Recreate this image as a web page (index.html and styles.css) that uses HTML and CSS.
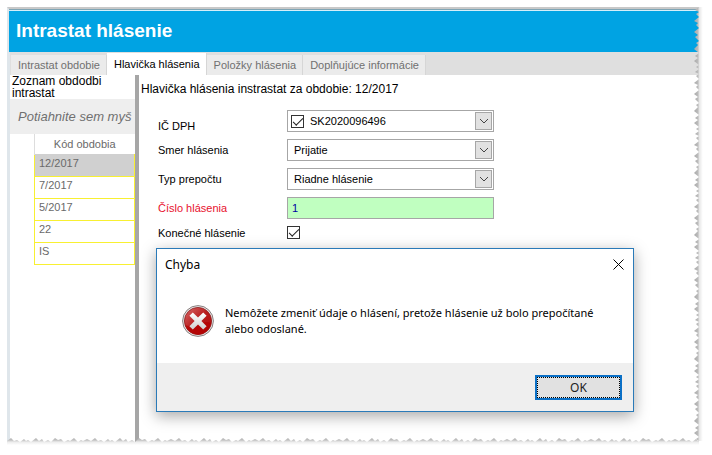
FILE: index.html
```html
<!DOCTYPE html>
<html lang="sk">
<head>
  <meta charset="UTF-8">
  <meta name="viewport" content="width=device-width, initial-scale=1.0">
  <title>Intrastat hlásenie</title>
  <link rel="stylesheet" href="styles.css">
</head>
<body>
  <div class="window">
    <header class="title-bar">
      <h1>Intrastat hlásenie</h1>
    </header>

    <nav class="tabs">
      <a href="#obdobie">Intrastat obdobie</a>
      <a href="#hlavicka" class="active">Hlavička hlásenia</a>
      <a href="#polozky">Položky hlásenia</a>
      <a href="#informacie">Doplňujúce informácie</a>
    </nav>

    <div class="content">
      <aside class="sidebar">
        <h2>Zoznam obdodbi intrastat</h2>
        <div class="group-panel">Potiahnite sem myš</div>
        <table class="periods">
          <thead>
            <tr><th>Kód obdobia</th></tr>
          </thead>
          <tbody>
            <tr class="selected"><td>12/2017</td></tr>
            <tr><td>7/2017</td></tr>
            <tr><td>5/2017</td></tr>
            <tr><td>22</td></tr>
            <tr><td>IS</td></tr>
          </tbody>
        </table>
      </aside>

      <main class="detail">
        <h2>Hlavička hlásenia instrastat za obdobie: 12/2017</h2>
        <form>
          <div class="field field-low">
            <label for="icdph">IČ DPH</label>
            <div class="combo">
              <input type="checkbox" class="check" aria-label="Použiť IČ DPH" checked>
              <select id="icdph"><option>SK2020096496</option></select>
              <span class="arrow"><svg width="10" height="6" viewBox="0 0 10 6"><path d="M1 1l4 4 4-4"/></svg></span>
            </div>
          </div>
          <div class="field">
            <label for="smer">Smer hlásenia</label>
            <div class="combo">
              <select id="smer"><option>Prijatie</option></select>
              <span class="arrow"><svg width="10" height="6" viewBox="0 0 10 6"><path d="M1 1l4 4 4-4"/></svg></span>
            </div>
          </div>
          <div class="field">
            <label for="typ">Typ prepočtu</label>
            <div class="combo">
              <select id="typ"><option>Riadne hlásenie</option></select>
              <span class="arrow"><svg width="10" height="6" viewBox="0 0 10 6"><path d="M1 1l4 4 4-4"/></svg></span>
            </div>
          </div>
          <div class="field">
            <label for="cislo" class="required">Číslo hlásenia</label>
            <input type="text" id="cislo" class="number" value="1">
          </div>
          <div class="field">
            <label for="konecne">Konečné hlásenie</label>
            <input type="checkbox" id="konecne" class="check" checked>
          </div>
        </form>
      </main>
    </div>

    <!-- torn paper edges -->
    <svg class="tear tear-right" aria-hidden="true">
      <defs>
        <linearGradient id="fadeRight" gradientUnits="userSpaceOnUse" x1="0" y1="0" x2="12" y2="0">
          <stop offset="0" stop-color="#a0a0a0"/>
          <stop offset="0.5" stop-color="#bcbcbc"/>
          <stop offset="0.6" stop-color="#e6e6e6"/>
          <stop offset="0.9" stop-color="#ffffff"/>
        </linearGradient>
        <pattern id="teethRight" width="12" height="62" patternUnits="userSpaceOnUse">
          <path fill="url(#fadeRight)" d="M12 0H7L3 3 7 5 4 7 7 10 2 14 6 16 4 18 7 21 2 25 6 28 3 30 7 34 4 36 6 38 2 42 7 46 3 49 6 51 2 54 7 58 4 60 7 62H12Z"/>
        </pattern>
      </defs>
      <rect width="12" height="100%" fill="url(#teethRight)"/>
    </svg>
    <svg class="tear tear-bottom" aria-hidden="true">
      <defs>
        <linearGradient id="fadeBottom" gradientUnits="userSpaceOnUse" x1="0" y1="0" x2="0" y2="10">
          <stop offset="0" stop-color="#a8a8a8"/>
          <stop offset="0.4" stop-color="#c0c0c0"/>
          <stop offset="0.6" stop-color="#ececec"/>
          <stop offset="0.9" stop-color="#ffffff"/>
        </linearGradient>
        <pattern id="teethBottom" width="84" height="10" patternUnits="userSpaceOnUse">
          <path fill="url(#fadeBottom)" d="M0 10V5L4 2 7 5 10 4 13 6 17 3 19 5 21 4 24 6 29 2 32 5 35 3 37 6 41 4 44 6 48 2 51 4 54 3 57 6 61 4 63 5 67 2 71 6 74 4 76 5 80 3 84 5V10Z"/>
        </pattern>
      </defs>
      <rect width="100%" height="10" fill="url(#teethBottom)"/>
    </svg>

    <section class="dialog" role="alertdialog" aria-labelledby="dialog-title">
      <div class="dialog-title">
        <span id="dialog-title">Chyba</span>
        <button type="button" class="close" aria-label="Zavrieť">
          <svg width="11" height="11" viewBox="0 0 11 11"><path d="M0.5 0.5l10 10M10.5 0.5l-10 10"/></svg>
        </button>
      </div>
      <div class="dialog-body">
        <svg class="error-icon" width="32" height="32" viewBox="0 0 32 32" aria-hidden="true">
          <defs>
            <linearGradient id="red" x1="0" y1="0" x2="1" y2="1">
              <stop offset="0" stop-color="#d96a6a"/>
              <stop offset="0.5" stop-color="#b81c1c"/>
              <stop offset="1" stop-color="#b00808"/>
            </linearGradient>
            <linearGradient id="cross" x1="0" y1="0" x2="0" y2="1">
              <stop offset="0" stop-color="#ffffff"/>
              <stop offset="1" stop-color="#cfcfcf"/>
            </linearGradient>
          </defs>
          <circle cx="16" cy="16" r="15.4" fill="#e8e8e8" stroke="#8a8080" stroke-width="1"/>
          <circle cx="16" cy="16" r="13.6" fill="url(#red)" stroke="#8c1c1c" stroke-width="0.8"/>
          <path d="M3 20A13.3 13.3 0 0 0 29 18C22 14 12 24 3 20Z" fill="#b40000" opacity="0.7"/>
          <path d="M10.8 7.4L16 12.6 21.2 7.4 24.6 10.8 19.4 16 24.6 21.2 21.2 24.6 16 19.4 10.8 24.6 7.4 21.2 12.6 16 7.4 10.8Z" fill="url(#cross)"/>
        </svg>
        <p>Nemôžete zmeniť údaje o hlásení, pretože hlásenie už bolo prepočítané alebo odoslané.</p>
      </div>
      <div class="dialog-footer">
        <button type="button" class="ok">OK</button>
      </div>
    </section>
  </div>
</body>
</html>
```
FILE: styles.css
```css
* {
    box-sizing: border-box;
}

body {
    margin: 0;
    padding: 7px 8px 9px 7px;
    background-color: #ffffff;
    color: #000000;
    font-family: "Liberation Sans", Arial, sans-serif;
    font-size: 11px;
}

h1,
h2,
p {
    margin: 0;
}

.window {
    position: relative;
    display: flex;
    flex-direction: column;
    min-height: calc(100vh - 16px);
    padding-right: 4px;
}

.title-bar {
    display: flex;
    align-items: center;
    height: 45px;
    padding-left: 7px;
    border-top: 2px solid #c8c8c8;
    border-left: 2px solid #dfe6eb;
    background-color: #00a3e3;
    box-shadow: inset 0 1px #7fa5b5, inset 0 2px #d5eef9;
}

h1 {
    color: #ffffff;
    font-size: 19px;
    line-height: 24px;
}

.tabs {
    display: flex;
    align-items: flex-end;
    height: 23px;
    padding-left: 1px;
    border-left: 3px solid #dfe6eb;
    background-color: #dfdfdf;
}

.tabs a {
    padding: 0 6px 0 7px;
    border-right: 1px solid #d6d6d6;
    background-color: #ebebeb;
    color: #707070;
    line-height: 20px;
    text-decoration: none;
    white-space: nowrap;
}

.tabs a.active {
    background-color: #ffffff;
    color: #000000;
    line-height: 22px;
}

.content {
    display: flex;
    flex: 1;
    border-left: 3px solid #dfe6eb;
}

.sidebar {
    flex: none;
    width: 129px;
    border-right: 4px solid #a6a6a6;
    overflow: hidden;
}

h2 {
    font-size: 12px;
    font-weight: normal;
}

.sidebar h2 {
    padding-left: 2px;
    line-height: 12px;
}

.group-panel {
    height: 35px;
    padding-left: 8px;
    background-color: #eeeeee;
    color: #707070;
    font-size: 13px;
    font-style: italic;
    line-height: 35px;
    white-space: nowrap;
}

.periods {
    width: 101px;
    margin-left: 24px;
    border-collapse: collapse;
    color: #6a6a6a;
}

.periods th {
    height: 20px;
    padding: 0;
    border-left: 1px solid #dddddd;
    font-weight: normal;
}

.periods td {
    height: 22px;
    padding: 1px 4px;
    border: 1px solid #f8f032;
    line-height: 14px;
    vertical-align: top;
}

.periods .selected td {
    border-top-color: #d0d0d0;
    background-color: #d0d0d0;
}

.detail {
    flex: 1;
    padding: 6px 2px;
}

.detail h2 {
    line-height: 16px;
}

.detail form {
    display: flex;
    flex-direction: column;
    gap: 7px;
    padding: 13px 0 0 17px;
}

.field {
    display: grid;
    grid-template-columns: 129px 207px;
    align-items: center;
}

.field-low label {
    align-self: end;
}

.required {
    color: #e8112d;
}

.combo {
    position: relative;
    display: flex;
    align-items: center;
    height: 22px;
    border: 1px solid #a6a6a6;
}

.combo .check {
    margin-left: 3px;
}

.combo select {
    flex: 1;
    height: 20px;
    padding: 0 20px 0 6px;
    border: 0;
    background: none;
    color: #000000;
    font: inherit;
    appearance: none;
}

/* the drop button sits over the select */
.arrow {
    position: absolute;
    top: 1px;
    right: 1px;
    bottom: 1px;
    display: flex;
    align-items: center;
    justify-content: center;
    width: 17px;
    border: 1px solid #a6a6a6;
    background-color: #e1e1e1;
    pointer-events: none;
}

.arrow path,
.close path {
    fill: none;
    stroke: #444444;
}

.close path {
    stroke: #000000;
}

.number {
    height: 22px;
    padding: 0 4px;
    border: 1px solid #a6a6a6;
    background-color: #c0ffc0;
    color: #0000a0;
    font: inherit;
}

.check {
    width: 13px;
    height: 13px;
    margin: 0;
    border: 1px solid #333333;
    background-color: #ffffff;
    appearance: none;
    display: grid;
    place-content: center;
}

.check:checked::before {
    content: "";
    width: 9px;
    height: 4px;
    border-left: 1px solid #222222;
    border-bottom: 1px solid #222222;
    transform: translateY(-1px) rotate(-45deg);
}

.tear {
    position: absolute;
    display: block;
    pointer-events: none;
}

.tear-right {
    top: 0;
    right: 0;
    width: 12px;
    height: calc(100% - 5px);
}

.tear-bottom {
    left: 0;
    bottom: 0;
    width: calc(100% - 5px);
    height: 10px;
}

.dialog {
    position: absolute;
    top: 241px;
    left: 149px;
    width: 478px;
    border: 1px solid #2a7ab8;
    background-color: #ffffff;
    box-shadow: 0 4px 14px rgba(0, 0, 0, 0.35);
    font-family: "Noto Sans", "Open Sans", sans-serif;
}

.dialog-title {
    display: flex;
    align-items: center;
    justify-content: space-between;
    height: 30px;
    padding: 0 9px 0 8px;
    font-size: 12px;
}

.close {
    display: flex;
    padding: 0;
    border: 0;
    background: none;
}

.dialog-body {
    display: flex;
    gap: 11px;
    height: 84px;
    padding: 26px 25px 0;
}

.error-icon {
    flex: none;
}

.dialog-body p {
    line-height: 16px;
}

.dialog-footer {
    display: flex;
    align-items: center;
    justify-content: flex-end;
    height: 48px;
    padding-right: 11px;
    background-color: #efefef;
    font-size: 12px;
}

.ok {
    width: 87px;
    height: 25px;
    padding: 0;
    border: 2px solid #0b70c6;
    outline: 1px dotted #000000;
    outline-offset: -3px;
    background-color: #e1e1e1;
    color: #222222;
    font: inherit;
}
```
